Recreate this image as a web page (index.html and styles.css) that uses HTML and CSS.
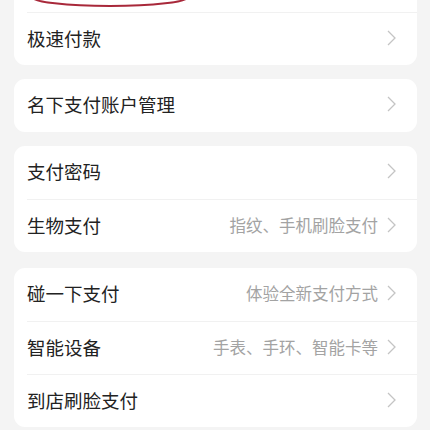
FILE: index.html
```html
<!DOCTYPE html>
<html lang="zh-CN">
<head>
<meta charset="utf-8">
<link rel="stylesheet" href="styles.css">
</head>
<body>
<div class="page">
  <div class="card">
    <div class="row row-hidden"></div>
    <div class="row"><span class="label">极速付款</span><span class="right"><svg class="chev" viewBox="0 0 9 16"><path d="M1 1 L8 8 L1 15"/></svg></span></div>
    <svg class="mark" width="180" height="20" viewBox="0 0 180 20"><ellipse cx="90" cy="-3" rx="78" ry="9"/></svg>
  </div>
  <div class="card">
    <div class="row"><span class="label">名下支付账户管理</span><span class="right"><svg class="chev" viewBox="0 0 9 16"><path d="M1 1 L8 8 L1 15"/></svg></span></div>
  </div>
  <div class="card">
    <div class="row"><span class="label">支付密码</span><span class="right"><svg class="chev" viewBox="0 0 9 16"><path d="M1 1 L8 8 L1 15"/></svg></span></div>
    <div class="row"><span class="label">生物支付</span><span class="right"><span class="sub">指纹、手机刷脸支付</span><svg class="chev" viewBox="0 0 9 16"><path d="M1 1 L8 8 L1 15"/></svg></span></div>
  </div>
  <div class="card card-last">
    <div class="row"><span class="label">碰一下支付</span><span class="right"><span class="sub">体验全新支付方式</span><svg class="chev" viewBox="0 0 9 16"><path d="M1 1 L8 8 L1 15"/></svg></span></div>
    <div class="row"><span class="label">智能设备</span><span class="right"><span class="sub">手表、手环、智能卡等</span><svg class="chev" viewBox="0 0 9 16"><path d="M1 1 L8 8 L1 15"/></svg></span></div>
    <div class="row"><span class="label">到店刷脸支付</span><span class="right"><svg class="chev" viewBox="0 0 9 16"><path d="M1 1 L8 8 L1 15"/></svg></span></div>
  </div>
</div>
</body>
</html>
```
FILE: styles.css
```css
* { box-sizing: border-box; }
html, body { margin: 0; padding: 0; }
body {
  background: #f4f4f4;
  font-family: "Noto Sans CJK SC", "Noto Sans", sans-serif;
  width: 430px;
  height: 430px;
  overflow: hidden;
}
.page {
  display: flex;
  flex-direction: column;
  gap: 14px;
  padding: 0 13px 0 14px;
  margin-top: -41px;
}
.card {
  position: relative;
  background: #ffffff;
  border-radius: 11px;
  overflow: hidden;
}
.card-last { margin-top: 2px; }
.row {
  height: 53px;
  display: flex;
  align-items: center;
  justify-content: space-between;
  margin-left: 13px;
  padding-right: 20px;
  padding-bottom: 3px;
  border-top: 1px solid #f1f1f1;
}
.row:first-child { border-top: none; }
.label {
  font-size: 18.5px;
  line-height: 22px;
  color: #222222;
}
.right {
  display: flex;
  align-items: center;
  gap: 8px;
}
.sub {
  font-size: 16.5px;
  line-height: 20px;
  color: #a3a3a3;
}
.chev {
  width: 11px;
  height: 16px;
  fill: none;
  stroke: #c4c4c4;
  stroke-width: 1.3;
}
.mark {
  position: absolute;
  left: 6px;
  top: 41px;
  overflow: visible;
}
.mark ellipse {
  fill: none;
  stroke: #a8283a;
  stroke-width: 2;
}
```
